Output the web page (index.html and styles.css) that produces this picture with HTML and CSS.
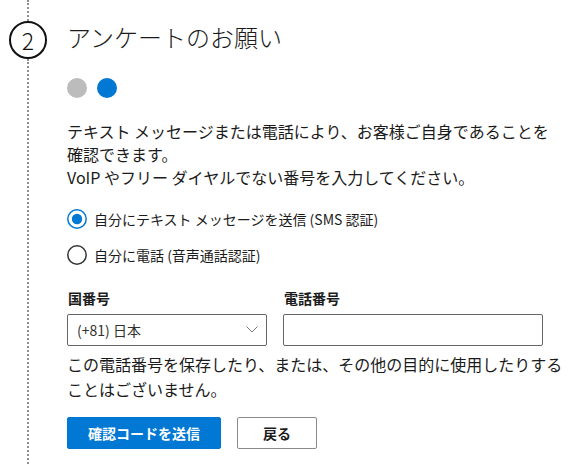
FILE: index.html
```html
<!DOCTYPE html>
<html lang="ja">
<head>
<meta charset="utf-8">
<link rel="stylesheet" href="styles.css">
</head>
<body>
<div class="step">
  <div class="rail">
    <div class="rail-top"></div>
    <div class="step-num">2</div>
    <div class="rail-line"></div>
  </div>
  <div class="content">
    <h1 class="title">アンケートのお願い</h1>
    <div class="dots">
      <span class="dot dot-done"></span>
      <span class="dot dot-active"></span>
    </div>
    <p class="intro">テキスト メッセージまたは電話により、お客様ご自身であることを<br>確認できます。<br>VoIP やフリー ダイヤルでない番号を入力してください。</p>
    <div class="options">
      <div class="option">
        <svg class="radio" width="20" height="20" viewBox="0 0 20 20"><circle cx="10" cy="10" r="9.2" fill="#fff" stroke="#0078d4" stroke-width="1.5"/><circle cx="10" cy="10" r="5.2" fill="#0078d4"/></svg>
        <span class="option-label">自分にテキスト メッセージを送信 (SMS 認証)</span>
      </div>
      <div class="option">
        <svg class="radio" width="20" height="20" viewBox="0 0 20 20"><circle cx="10" cy="10" r="9.2" fill="#fff" stroke="#333" stroke-width="1.5"/></svg>
        <span class="option-label">自分に電話 (音声通話認証)</span>
      </div>
    </div>
    <div class="fields">
      <div class="field">
        <div class="field-label">国番号</div>
        <div class="select">
          <span class="select-text">(+81) 日本</span>
          <svg class="chevron" width="12" height="7" viewBox="0 0 12 7"><polyline points="0.5,0.5 6,6 11.5,0.5" fill="none" stroke="#777" stroke-width="1"/></svg>
        </div>
      </div>
      <div class="field">
        <div class="field-label">電話番号</div>
        <div class="input"></div>
      </div>
    </div>
    <p class="note">この電話番号を保存したり、または、その他の目的に使用したりする<br>ことはございません。</p>
    <div class="actions">
      <button class="btn btn-primary">確認コードを送信</button>
      <button class="btn btn-secondary">戻る</button>
    </div>
  </div>
</div>
</body>
</html>
```
FILE: styles.css
```css
html, body {
  margin: 0;
  padding: 0;
  background: #fff;
}
body {
  font-family: "Noto Sans CJK JP", "Noto Sans", sans-serif;
  color: #1b1b1b;
  width: 574px;
  height: 464px;
  overflow: hidden;
}
.step {
  display: flex;
  height: 464px;
}
.rail {
  width: 56px;
  flex: none;
  display: flex;
  flex-direction: column;
  align-items: center;
}
.rail-top {
  height: 21px;
  border-left: 2px dotted #8f8f8f;
}
.rail-line {
  flex: 1;
  border-left: 2px dotted #8f8f8f;
}
.step-num {
  width: 38px;
  height: 38px;
  box-sizing: border-box;
  border: 2px solid #111;
  border-radius: 50%;
  display: flex;
  align-items: center;
  justify-content: center;
  font-size: 23px;
  font-weight: 300;
  line-height: 1;
  color: #111;
}
.content {
  padding-left: 11px;
  flex: 1;
}
.title {
  margin: 21px 0 0 0;
  font-size: 24px;
  font-weight: 300;
  line-height: 32px;
  color: #1b1b1b;
}
.dots {
  display: flex;
  gap: 10px;
  margin-top: 25px;
}
.dot {
  width: 20px;
  height: 20px;
  border-radius: 50%;
}
.dot-done { background: #bcbcbc; }
.dot-active { background: #0078d4; }
.intro {
  margin: 22px 0 0 0;
  font-size: 16px;
  line-height: 23px;
  color: #1b1b1b;
  white-space: nowrap;
}
.options {
  margin-top: 18px;
  display: flex;
  flex-direction: column;
  gap: 12px;
}
.option {
  display: flex;
  align-items: center;
  height: 24px;
  gap: 7px;
}
.radio { flex: none; }
.option-label {
  font-size: 14px;
  color: #1b1b1b;
}
.fields {
  margin-top: 21px;
  display: flex;
  gap: 16px;
}
.field-label {
  font-size: 14px;
  font-weight: 700;
  line-height: 20px;
  margin-bottom: 6px;
  padding-left: 1px;
}
.select {
  width: 200px;
  height: 32px;
  box-sizing: border-box;
  border: 1px solid #666;
  border-radius: 2px;
  display: flex;
  align-items: center;
  justify-content: space-between;
  padding: 0 8px 0 9px;
}
.select-text {
  font-size: 14px;
  color: #323130;
}
.chevron { margin-top: -2px; }
.input {
  width: 260px;
  height: 32px;
  box-sizing: border-box;
  border: 1px solid #666;
  border-radius: 2px;
}
.note {
  margin: 6px 0 0 0;
  font-size: 16px;
  line-height: 25px;
  white-space: nowrap;
}
.actions {
  margin-top: 15px;
  display: flex;
  gap: 16px;
}
.btn {
  font-family: "Noto Sans CJK JP", "Noto Sans", sans-serif;
  font-size: 14px;
  font-weight: 700;
  height: 32px;
  box-sizing: border-box;
  border-radius: 2px;
  padding: 0;
  cursor: pointer;
}
.btn-primary {
  width: 154px;
  background: #0078d4;
  color: #fff;
  border: 1px solid #0078d4;
}
.btn-secondary {
  width: 80px;
  background: #fff;
  color: #1b1b1b;
  border: 1px solid #8a8a8a;
}
```
